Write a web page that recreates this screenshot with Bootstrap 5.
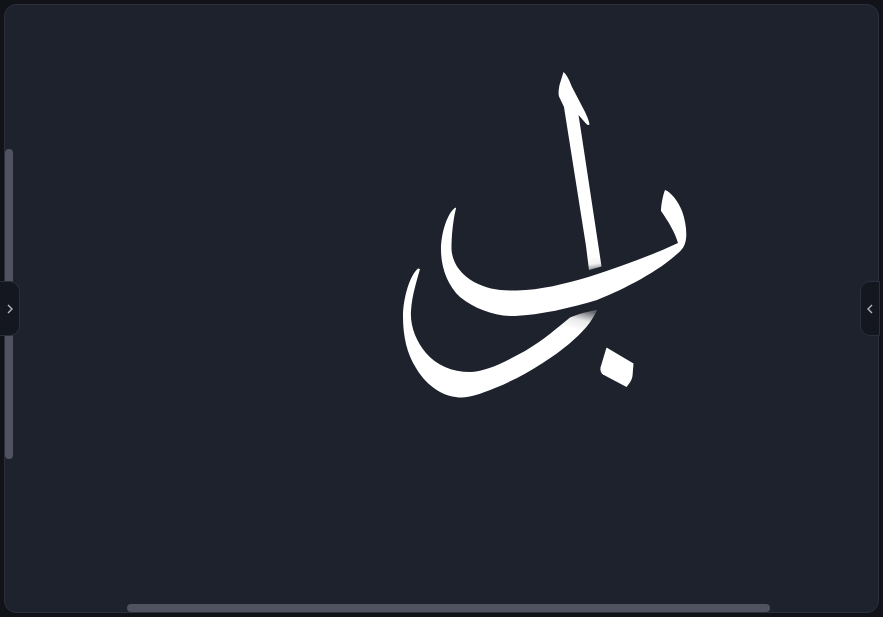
<!doctype html>
<html lang="ar" data-bs-theme="dark">
<head>
<meta charset="utf-8">
<title>ب</title>
<link href="https://cdn.jsdelivr.net/npm/bootstrap@5.3.0/dist/css/bootstrap.min.css" rel="stylesheet">
<style>
html,body{height:100%;margin:0;overflow:hidden}
body.stage-body{background:#111318;padding:4px 4px 4px 4px}
.stage-panel{background:#1e222d;border:1px solid #2a2f3c;border-radius:12px;width:875px;height:609px}
.stage-art{display:block;position:absolute;left:-1px;top:-1px;width:875px;height:609px}
.thumb-v,.thumb-h{position:absolute;background:#50535f;border-radius:4px}
.thumb-v{left:0;top:144px;width:8px;height:310px}
.thumb-h{left:122px;top:599px;width:643px;height:8px}
.side-tab{position:absolute;top:276px;width:20px;height:55px;padding:0;background:#14171f;border:1px solid #2a2f3c;color:#b4b7c0;display:flex;align-items:center;justify-content:center}
.side-left{left:-5px;border-left:0;border-radius:0 10px 10px 0}
.side-right{left:855px;border-radius:10px 0 0 10px}
.side-tab svg{width:8px;height:12px}
</style>
</head>
<body class="stage-body d-flex">
<main class="stage-panel position-relative">
<svg class="stage-art" viewBox="4 4 875 609" role="img" aria-label="ب">
<defs>
<linearGradient id="fadeA" gradientUnits="userSpaceOnUse" x1="594" y1="256" x2="596" y2="270">
<stop offset="0" stop-color="#fff"/><stop offset=".55" stop-color="#f2f2f2"/><stop offset="1" stop-color="#85878c"/>
</linearGradient>
<linearGradient id="fadeB" gradientUnits="userSpaceOnUse" x1="585" y1="310" x2="580" y2="331">
<stop offset="0" stop-color="#1e222d" stop-opacity=".7"/><stop offset=".5" stop-color="#1e222d" stop-opacity=".1"/><stop offset="1" stop-color="#1e222d" stop-opacity="0"/>
</linearGradient>
</defs>
<path fill="url(#fadeA)" d="M563.500 72C566 74 569 79 572 87L584 110C586 114 589 120 589.500 124.500C588.500 125.500 587 125 585.500 123L578.500 115L581 131L601 263L601.500 266.500L589 270L586 246L565 113.500L564 107L559 96.500C558 93 559 88 559.500 85Z"/>
<path fill="#fff" d="M418 268.500L420 269C417 280 412 295 411 311C410 326 416 341 426 353C436 365 452 372 470 372C485 372 505 362 525 351C545 339 557 328 570 317.500C578 314 590 311 597 310C592 322 582 333 569 344C552 358 525 376 495 388C480 394 470 397.500 462 397.500C445 397.500 428 388 416 368C407 354 403 336 403 317C403 298 410 275 418 268.500Z"/>
<rect x="560" y="306" width="40" height="30" fill="url(#fadeB)"/>
<path fill="#fff" d="M665 190C671 192 678 201 682 211C685.500 220 687 232 686 239C685 246 682 250 677 254C660 270 625 289 597 300C570 308 540 315 515 316C495 316.500 475 309 460 297C448 286 441 268 441 250C441 232 448 212 455.500 207.500L456 208.500C453 220 451.500 236 451.500 249C452 262 460 274 474 282C487 289 500 291 517 290.500C540 290 565 284 590 276.500C620 267 650 256 678 243C675 232 668 221 661 211C661 205 663 195 665 190Z"/>
<path fill="#fff" d="M606.500 347.500L633.500 363.500L632.500 376C632 380 629 384 626.500 387L603 374.500C601 373 600 370 600.500 367.500Z"/>
</svg>
<div class="thumb-v"></div>
<div class="thumb-h"></div>
<button type="button" class="side-tab side-left" aria-label="Open left panel"><svg viewBox="0 0 8 12"><path d="M2 2l4 4-4 4" fill="none" stroke="currentColor" stroke-width="1.400"/></svg></button>
<button type="button" class="side-tab side-right" aria-label="Open right panel"><svg viewBox="0 0 8 12"><path d="M6 2L2 6l4 4" fill="none" stroke="currentColor" stroke-width="1.400"/></svg></button>
</main>
<script src="https://cdn.jsdelivr.net/npm/bootstrap@5.3.0/dist/js/bootstrap.bundle.min.js"></script>
</body>
</html>
